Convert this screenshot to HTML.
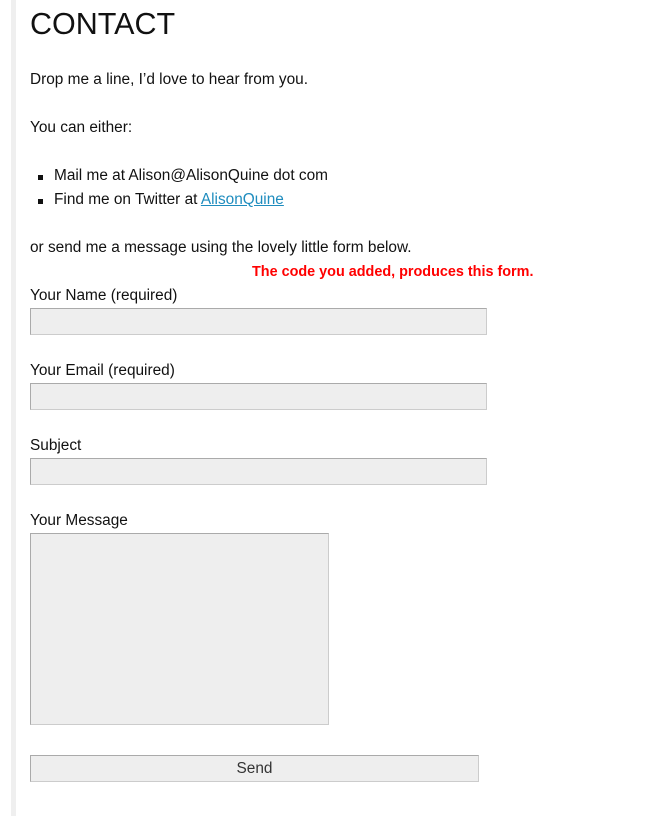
<!DOCTYPE html>
<html><head><style>
body{margin:0;width:646px;height:816px;background:#fff;font-family:"Liberation Sans",Arial,sans-serif;color:#111;position:relative;overflow:hidden}
.s{position:absolute;left:11px;top:0;width:5px;height:816px;background:#efefef}
.t{position:absolute;left:30px;font-size:15.4px;line-height:24px;white-space:nowrap}
.b{position:absolute;background:#eee;border:1px solid #ccc;border-top-color:#aaa;border-left-color:#aaa;box-sizing:border-box}
a{color:#1e8cbe}
.sq{display:inline-block;width:5px;height:5px;background:#111;position:absolute;left:-16px;top:11px}
</style></head><body>
<div class="s"></div>
<div class="t" style="top:4px;font-size:30.5px;line-height:40px">CONTACT</div>
<div class="t" style="top:68px">Drop me a line, I’d love to hear from you.</div>
<div class="t" style="top:116px">You can either:</div>
<div class="t" style="top:164px;left:54px"><span class="sq"></span>Mail me at Alison@AlisonQuine dot com</div>
<div class="t" style="top:188px;left:54px"><span class="sq"></span>Find me on Twitter at <a href="#">AlisonQuine</a></div>
<div class="t" style="top:236px">or send me a message using the lovely little form below.</div>
<div class="t" style="top:263px;left:252px;font-size:14.4px;line-height:18px;font-weight:bold;color:#f00">The code you added, produces this form.</div>
<div class="t" style="top:284px">Your Name (required)</div>
<div class="b" style="left:30px;top:308px;width:457px;height:27px"></div>
<div class="t" style="top:359px">Your Email (required)</div>
<div class="b" style="left:30px;top:383px;width:457px;height:27px"></div>
<div class="t" style="top:434px">Subject</div>
<div class="b" style="left:30px;top:458px;width:457px;height:27px"></div>
<div class="t" style="top:509px">Your Message</div>
<div class="b" style="left:30px;top:533px;width:299px;height:192px"></div>
<div class="b" style="left:30px;top:755px;width:449px;height:27px;text-align:center;font-size:15.4px;line-height:25px;color:#333">Send</div>
</body></html>
